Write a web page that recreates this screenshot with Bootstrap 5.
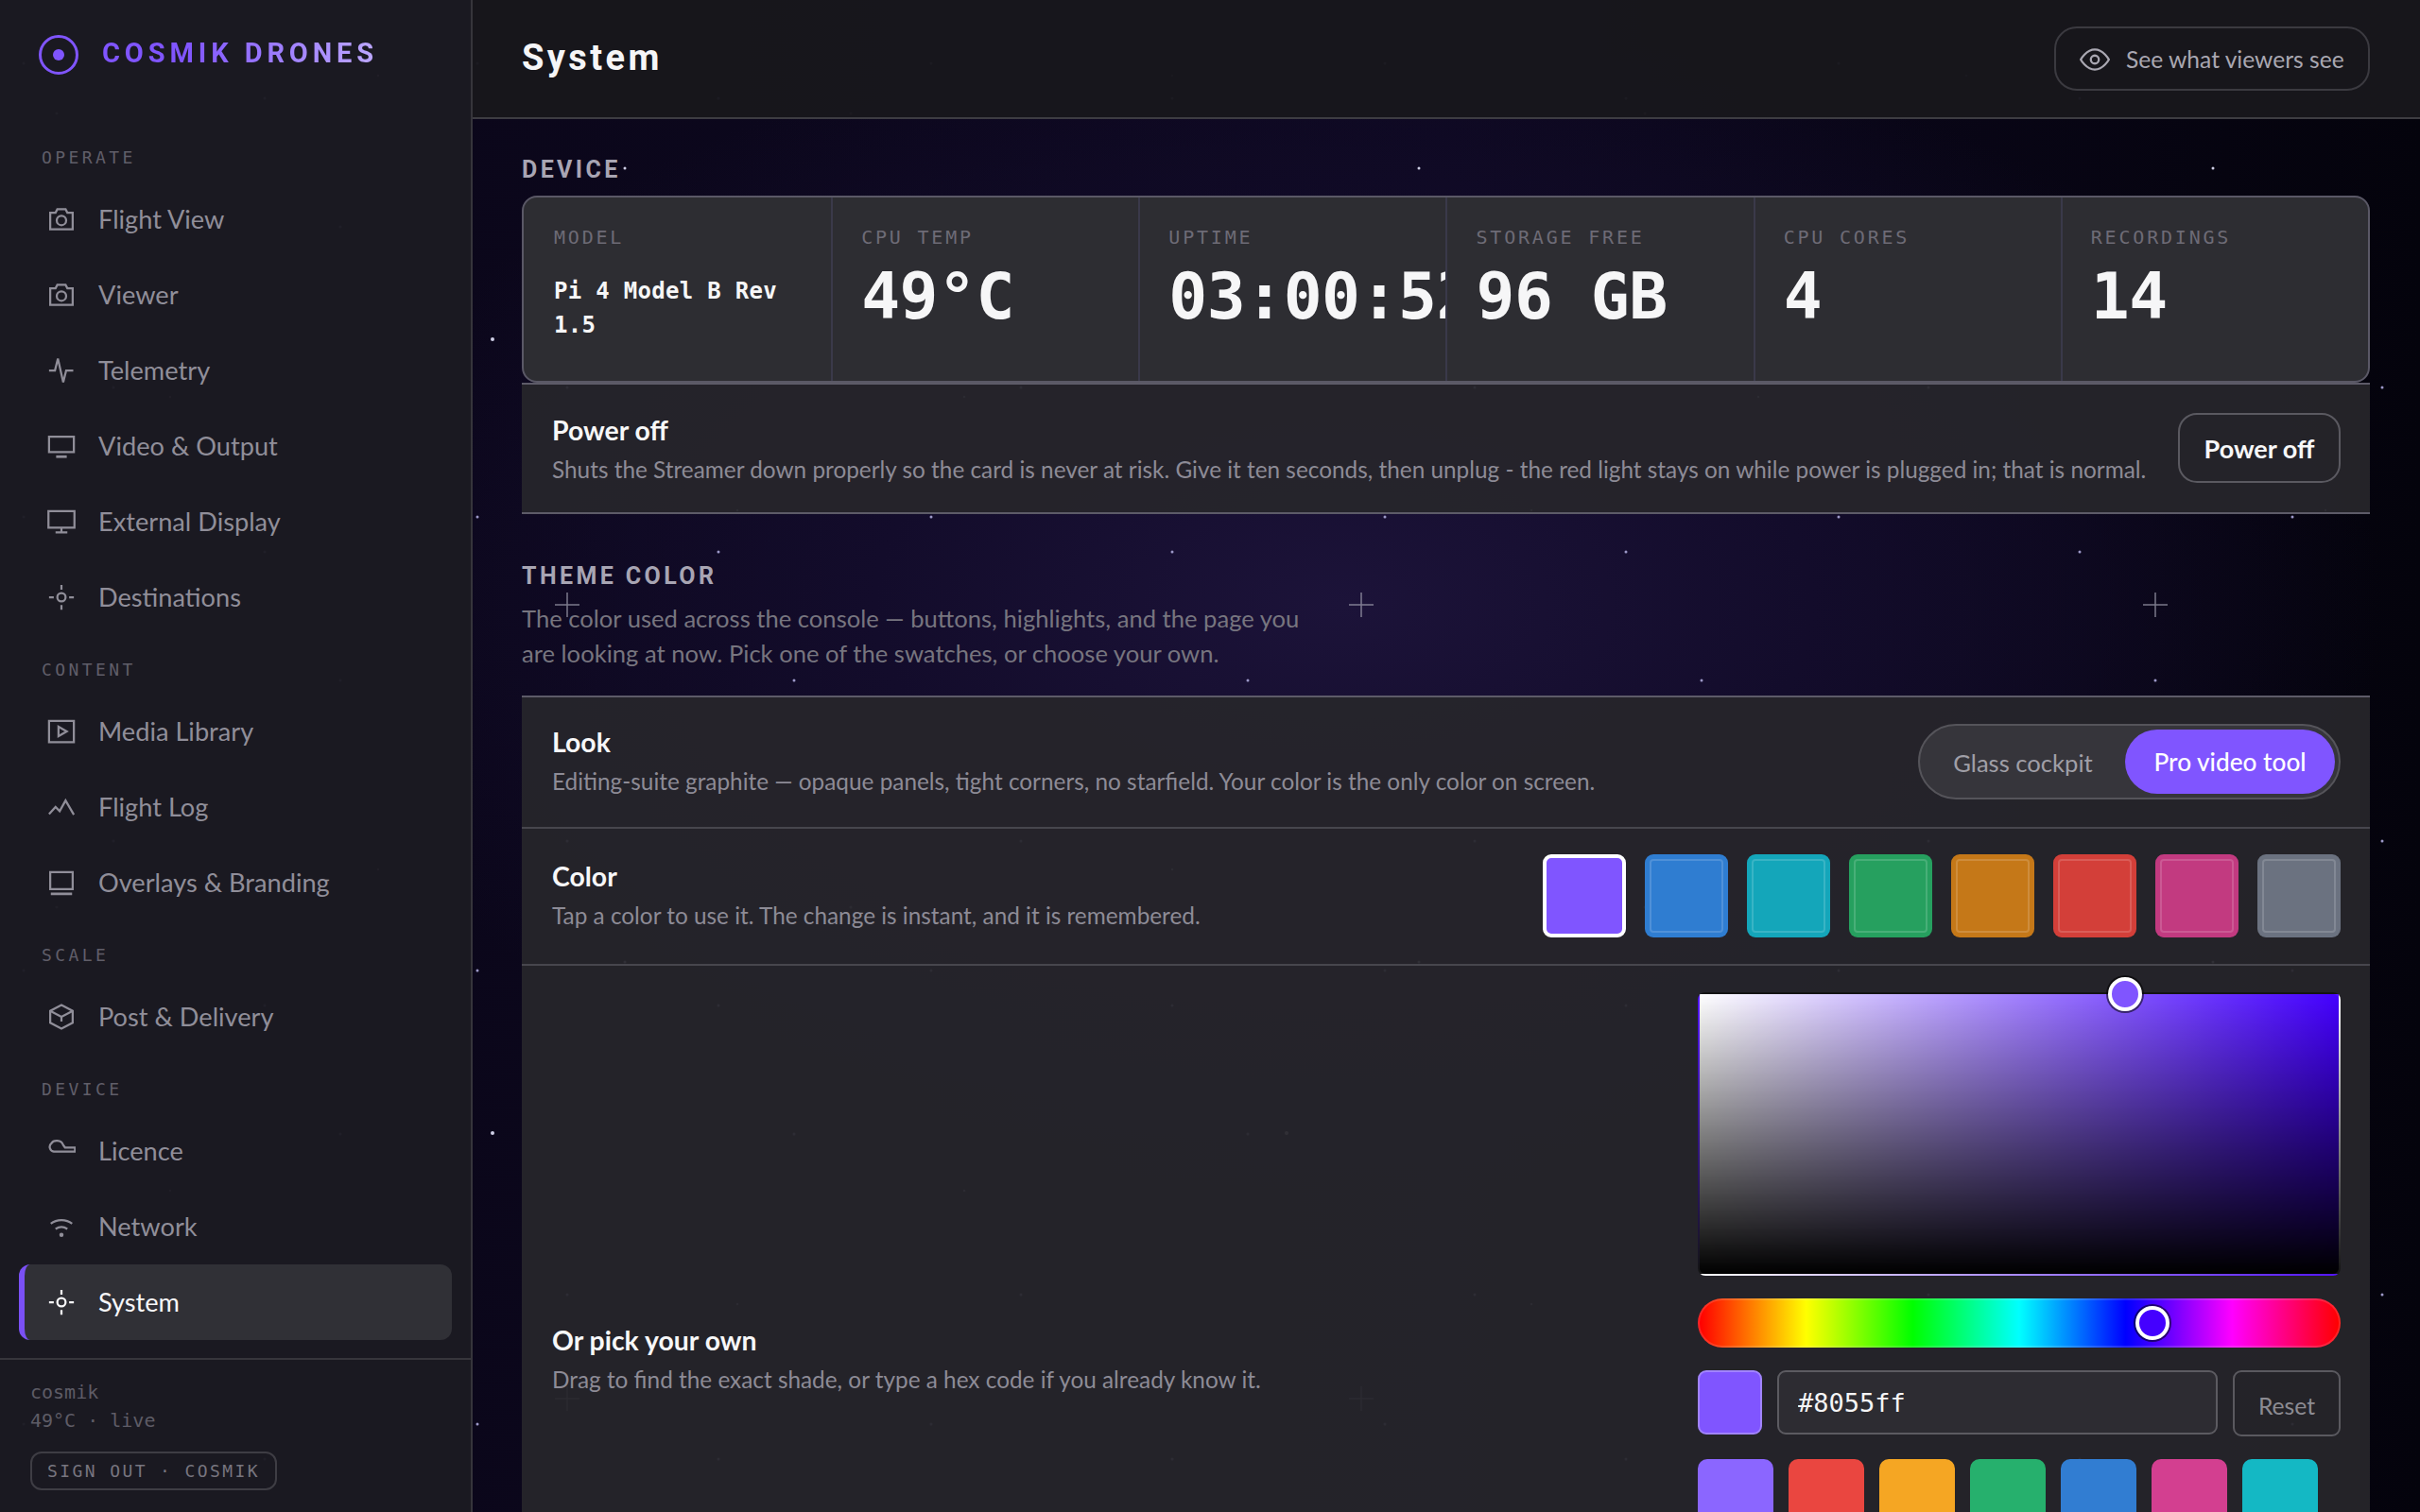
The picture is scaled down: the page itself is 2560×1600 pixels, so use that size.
<!DOCTYPE html>
<html lang="en">
<head>
  <meta charset="UTF-8" />
  <meta name="viewport" content="width=device-width, initial-scale=1.0" />
  <title>System</title>
  <link href="https://cdn.jsdelivr.net/npm/bootstrap@5.3.0/dist/css/bootstrap.min.css" rel="stylesheet" />
  <style>
    html, body { height: 100%; overflow: hidden; }

    body {
      font-family: Lato, "Noto Sans", sans-serif;
      color: #f5f5f7;
      background-color: #06040f;
      background-image:
        url("data:image/svg+xml,%3Csvg xmlns='http://www.w3.org/2000/svg' width='840' height='840'%3E%3Cg fill='%23cfcfe6'%3E%3Ccircle cx='661' cy='178' r='1.5'/%3E%3Ccircle cx='521' cy='359' r='2'/%3E%3C/g%3E%3Cg fill='%238f8ca8'%3E%3Ccircle cx='60' cy='120' r='1.5'/%3E%3Ccircle cx='400' cy='80' r='1.2'/%3E%3Ccircle cx='180' cy='420' r='1.2'/%3E%3Ccircle cx='780' cy='540' r='1.2'/%3E%3C/g%3E%3Cpath d='M600 627v26M587 640h26' stroke='%23a9a8b8' stroke-opacity='.7' stroke-width='1.5'/%3E%3C/svg%3E"),
        url("data:image/svg+xml,%3Csvg xmlns='http://www.w3.org/2000/svg' width='480' height='480'%3E%3Cg fill='%239c98c8'%3E%3Ccircle cx='25' cy='67' r='1.5'/%3E%3Ccircle cx='120' cy='410' r='1.5'/%3E%3Ccircle cx='280' cy='104' r='1.5'/%3E%3Ccircle cx='360' cy='240' r='1.5'/%3E%3C/g%3E%3C/svg%3E"),
        radial-gradient(ellipse 1100px 620px at 1420px 640px, #1c1339 0%, #130c2b 45%, rgba(8, 5, 20, 0) 100%),
        linear-gradient(90deg, #0a0618 0%, #0d0820 60%, #04030c 100%);
    }

    .app-shell { height: 100vh; }

    /* sidebar */
    .side-rail {
      width: 500px;
      background: rgba(27, 26, 33, .96);
      border-right: 2px solid #36353b;
    }

    .brand-row { height: 154px; padding: 36px 0 0 40px; gap: 24px; }
    .brand-name {
      font-family: Roboto, sans-serif;
      font-weight: 700;
      font-size: 29px;
      line-height: 40px;
      letter-spacing: 4.9px;
      background: linear-gradient(90deg, #8055ff 30%, #bda8ff 100%);
      -webkit-background-clip: text;
      background-clip: text;
      color: transparent;
    }

    .rail-nav { padding: 0 20px; }
    .rail-label {
      font-family: "DejaVu Sans Mono", monospace;
      font-size: 18px;
      line-height: 26px;
      letter-spacing: 3.4px;
      color: #605e69;
      padding-left: 24px;
      margin: 24px 0 12px;
    }
    .rail-label:first-child { margin-top: 0; }
    .rail-item {
      height: 80px;
      width: 458px;
      padding-left: 24px;
      gap: 24px;
      font-size: 27.2px;
      color: #908e99;
      text-decoration: none;
      border-left: 6px solid transparent;
      border-radius: 12px;
    }
    .rail-item.is-active {
      color: #f7f7f9;
      background: #303036;
      border-left-color: #7a50f5;
    }
    .nav-glyph { width: 30px; height: 30px; flex: none; fill: none; stroke: currentColor; stroke-width: 1.8; }

    .rail-foot {
      margin-top: 19px;
      padding: 19px 0 0 32px;
      border-top: 2px solid #36353b;
      font-family: "DejaVu Sans Mono", monospace;
      font-size: 20px;
      line-height: 30px;
      color: #5e5c66;
    }
    .signout-btn {
      display: block;
      width: 261px;
      height: 41px;
      margin-top: 18px;
      padding: 0;
      font-family: "DejaVu Sans Mono", monospace;
      font-size: 18px;
      line-height: 36px;
      letter-spacing: 2.4px;
      color: #77757f;
      background: transparent;
      border: 2px solid #3e3d44;
      border-radius: 12px;
    }

    /* top bar */
    .top-strip {
      height: 126px;
      padding: 0 53px 0 52px;
      background: rgba(24, 23, 28, .97);
      border-bottom: 2px solid #3d3c42;
    }
    .page-name {
      font-family: Roboto, sans-serif;
      font-weight: 700;
      font-size: 38px;
      letter-spacing: 3.4px;
      margin: 0;
    }
    .viewer-btn {
      height: 68px;
      width: 334px;
      padding: 2px 0 0 24px;
      gap: 16px;
      font-size: 24.6px;
      color: #a9a7b1;
      background: transparent;
      border: 2px solid #3b3a40;
      border-radius: 24px;
    }
    .viewer-btn svg { width: 34px; height: 34px; fill: none; stroke: currentColor; stroke-width: 1.6; }

    /* content */
    .page-body { padding: 0 53px 0 52px; }
    .block-title {
      font-family: Roboto, sans-serif;
      font-weight: 700;
      font-size: 25px;
      line-height: 32px;
      letter-spacing: 3.4px;
      color: #a8a5b3;
      margin: 0;
    }
    .block-title.first { padding-top: 38px; margin-bottom: 11px; }
    .block-title.second { margin-top: 50px; }
    .block-note {
      max-width: 850px;
      margin: 10px 0 26px;
      font-size: 25.6px;
      line-height: 37px;
      color: #77757f;
    }

    .stat-card {
      height: 198px;
      background: #2d2d32;
      border: 2px solid #5a5866;
      border-radius: 16px;
      overflow: hidden;
    }
    .stat-cell {
      height: 194px;
      padding: 30px 0 0 32px;
      overflow: hidden;
    }
    .stat-cell + .stat-cell { padding-left: 30px; border-left: 2px solid #3a394a; }
    .stat-label {
      font-family: "DejaVu Sans Mono", monospace;
      font-size: 20px;
      line-height: 24px;
      letter-spacing: 2.8px;
      color: #6d6b76;
    }
    .stat-value {
      font-family: "DejaVu Sans Mono", monospace;
      font-weight: 700;
      font-size: 68px;
      line-height: 64px;
      letter-spacing: -0.5px;
      margin-top: 19px;
      white-space: nowrap;
      color: #f6f6f7;
    }
    .stat-text {
      font-family: "DejaVu Sans Mono", monospace;
      font-weight: 700;
      font-size: 24px;
      line-height: 36px;
      letter-spacing: .3px;
      margin-top: 27px;
      color: #f6f6f7;
      padding-right: 20px;
    }

    .set-panel { background: rgba(38, 37, 43, .94); }
    .set-panel.top-edge { border-top: 2px solid #5d5b68; }
    .set-row {
      padding: 28px 31px 28px 32px;
      border-bottom: 2px solid #47464d;
    }
    .set-row.power-row {
      height: 139px;
      padding-top: 0;
      padding-bottom: 0;
      border-bottom-color: #5d5b68;
      box-shadow: inset 0 2px 0 #5d5b68;
    }
    .set-row.look-row { padding-bottom: 29px; }
    .set-row.color-row { padding-top: 27px; }
    .set-name { font-size: 28.4px; line-height: 38px; font-weight: 700; color: #f7f7f8; }
    .set-help { font-size: 24.35px; line-height: 38px; margin-top: 4px; color: #8d8b96; }

    .power-btn {
      width: 172px;
      height: 74px;
      padding: 4px 0 0;
      font-size: 27px;
      font-weight: 700;
      color: #f7f7f8;
      background: transparent;
      border: 2px solid #5a5960;
      border-radius: 20px;
    }

    .mode-switch {
      height: 80px;
      width: 447px;
      padding: 4px;
      background: #36353b;
      border: 2px solid #55545a;
      border-radius: 40px;
    }
    .mode-opt {
      height: 68px;
      padding: 2px 0 0;
      font-size: 25.6px;
      color: #a09fa7;
      background: transparent;
      border: 0;
      border-radius: 34px;
    }
    .mode-opt.glass { width: 210px; }
    .mode-opt.on { width: 222px; margin-left: auto; font-size: 26.2px; color: #fff; font-weight: 500; background: #8055ff; }

    .swatch-row { gap: 20px; }
    .swatch-tile {
      width: 88px;
      height: 88px;
      padding: 0;
      border: 0;
      border-radius: 9px;
      outline: 2px solid rgba(255, 255, 255, .16);
      outline-offset: -7px;
    }
    .swatch-tile.picked { border: 4px solid #fff; outline: 0; }

    .pick-row { height: 806px; padding: 28px 31px 0 32px; }
    .pick-col { width: 680px; flex: none; }
    .sv-field {
      position: relative;
      height: 300px;
      border: 2px solid rgba(255, 255, 255, .08);
      border-radius: 8px;
      background: linear-gradient(to top, #000, transparent), linear-gradient(to right, #fff, #4400ff);
    }
    .hue-track {
      position: relative;
      height: 52px;
      margin-top: 24px;
      border: 2px solid rgba(255, 255, 255, .14);
      border-radius: 26px;
      background: linear-gradient(to right, #f00, #ff0, #0f0, #0ff, #00f, #f0f, #f00);
    }
    .drag-knob {
      position: absolute;
      width: 36px;
      height: 36px;
      transform: translate(-50%, -50%);
      border: 4px solid #fff;
      border-radius: 50%;
      box-shadow: 0 0 0 2px rgba(0, 0, 0, .55);
    }
    .hex-row { gap: 16px; margin-top: 24px; }
    .hex-chip {
      width: 68px;
      height: 68px;
      flex: none;
      background: #8055ff;
      border: 2px solid #a184ff;
      border-radius: 9px;
    }
    .hex-input.form-control {
      height: 68px;
      padding: 0 20px;
      font-family: "DejaVu Sans Mono", monospace;
      font-size: 27px;
      font-weight: 500;
      color: #f5f5f6;
      background: #2d2c32;
      border: 2px solid #5c5b61;
      border-radius: 9px;
    }
    .reset-btn {
      width: 114px;
      height: 70px;
      flex: none;
      padding: 6px 0 0;
      font-size: 24.7px;
      color: #8c8b92;
      background: transparent;
      border: 2px solid #5a595f;
      border-radius: 9px;
    }
    .preset-row { gap: 16px; margin-top: 24px; }
    .preset-tile { width: 80px; height: 80px; flex: none; border-radius: 10px; }
  </style>
</head>

<body>

  <svg width="0" height="0" class="position-absolute">
    <symbol id="i-camera" viewBox="0 0 24 24"><path d="M2.500 6.500h4.500l1.500-3h7l1.500 3h4.500v14h-19z" /><circle cx="12" cy="13" r="4" /></symbol>
    <symbol id="i-pulse" viewBox="0 0 24 24"><path d="M1.500 12h5l2.500-10 4.500 20 2.500-10h6" /></symbol>
    <symbol id="i-screen" viewBox="0 0 24 24"><path d="M1.500 4h21v13h-21z" /><path d="M7.500 21h9" stroke-width="2.200" /></symbol>
    <symbol id="i-display" viewBox="0 0 24 24"><path d="M1 3h22v14h-22z" /><path d="M12 17v4M7 21h10" /></symbol>
    <symbol id="i-target" viewBox="0 0 24 24"><circle cx="12" cy="12" r="3.500" /><path d="M12 1.500v4M12 18.500v4M1.500 12h4M18.500 12h4" /></symbol>
    <symbol id="i-media" viewBox="0 0 24 24"><path d="M1.500 3h21v18h-21z" /><path d="M9.500 8l7 4-7 4z" /></symbol>
    <symbol id="i-chart" viewBox="0 0 24 24"><path d="M1.500 18l5.500-6 3.500 3.500 5-9 7 12" /></symbol>
    <symbol id="i-overlay" viewBox="0 0 24 24"><path d="M2.500 3h19v14.500h-19z" /><path d="M3 21.500h18" stroke-width="2.200" /></symbol>
    <symbol id="i-box" viewBox="0 0 24 24"><path d="M12 2l9.500 5v10l-9.500 5-9.500-5v-10z" /><path d="M2.500 7l9.500 5 9.500-5M12 12v4" /></symbol>
    <symbol id="i-cloud" viewBox="0 0 24 24"><path d="M23.500 12.500h-18a4 4 0 0 1-2-7c1.500-3 8.500-3.500 10 1.500l1.500 2h8.500z" /></symbol>
    <symbol id="i-wifi" viewBox="0 0 24 24"><path d="M3 9.500c5-4 13-4 18 0M7 14c3-2 7-2 10 0" /><circle cx="12" cy="19" r="1.800" fill="currentColor" stroke="none" /></symbol>
  </svg>

  <div class="app-shell d-flex">

    <aside class="side-rail flex-shrink-0">
      <div class="brand-row d-flex align-items-start">
        <svg width="44" height="44" viewBox="0 0 44 44" class="flex-shrink-0">
          <circle cx="22" cy="22" r="19.500" fill="none" stroke="#8055ff" stroke-width="3" />
          <circle cx="22" cy="22" r="6" fill="#8055ff" />
        </svg>
        <span class="brand-name">COSMIK DRONES</span>
      </div>

      <nav class="rail-nav">
        <div class="rail-label">OPERATE</div>
        <a href="#" class="rail-item d-flex align-items-center"><svg class="nav-glyph"><use href="#i-camera" /></svg>Flight View</a>
        <a href="#" class="rail-item d-flex align-items-center"><svg class="nav-glyph"><use href="#i-camera" /></svg>Viewer</a>
        <a href="#" class="rail-item d-flex align-items-center"><svg class="nav-glyph"><use href="#i-pulse" /></svg>Telemetry</a>
        <a href="#" class="rail-item d-flex align-items-center"><svg class="nav-glyph"><use href="#i-screen" /></svg>Video &amp; Output</a>
        <a href="#" class="rail-item d-flex align-items-center"><svg class="nav-glyph"><use href="#i-display" /></svg>External Display</a>
        <a href="#" class="rail-item d-flex align-items-center"><svg class="nav-glyph"><use href="#i-target" /></svg>Destinations</a>

        <div class="rail-label">CONTENT</div>
        <a href="#" class="rail-item d-flex align-items-center"><svg class="nav-glyph"><use href="#i-media" /></svg>Media Library</a>
        <a href="#" class="rail-item d-flex align-items-center"><svg class="nav-glyph"><use href="#i-chart" /></svg>Flight Log</a>
        <a href="#" class="rail-item d-flex align-items-center"><svg class="nav-glyph"><use href="#i-overlay" /></svg>Overlays &amp; Branding</a>

        <div class="rail-label">SCALE</div>
        <a href="#" class="rail-item d-flex align-items-center"><svg class="nav-glyph"><use href="#i-box" /></svg>Post &amp; Delivery</a>

        <div class="rail-label">DEVICE</div>
        <a href="#" class="rail-item d-flex align-items-center"><svg class="nav-glyph"><use href="#i-cloud" /></svg>Licence</a>
        <a href="#" class="rail-item d-flex align-items-center"><svg class="nav-glyph"><use href="#i-wifi" /></svg>Network</a>
        <a href="#" class="rail-item is-active d-flex align-items-center"><svg class="nav-glyph"><use href="#i-target" /></svg>System</a>
      </nav>

      <div class="rail-foot">
        <div>cosmik</div>
        <div>49°C · live</div>
        <button type="button" class="signout-btn">SIGN OUT · COSMIK</button>
      </div>
    </aside>

    <main class="flex-grow-1 overflow-hidden">
      <header class="top-strip d-flex justify-content-between align-items-center">
        <h1 class="page-name">System</h1>
        <button type="button" class="viewer-btn d-flex align-items-center">
          <svg viewBox="0 0 24 24"><path d="M1.500 12s4-7.500 10.500-7.500 10.500 7.500 10.500 7.500-4 7.500-10.500 7.500-10.500-7.500-10.500-7.500z" /><circle cx="12" cy="12" r="3" /></svg>
          See what viewers see
        </button>
      </header>

      <div class="page-body">
        <h2 class="block-title first">DEVICE</h2>

        <div class="stat-card row g-0">
          <div class="stat-cell col-2">
            <div class="stat-label">MODEL</div>
            <div class="stat-text">Pi 4 Model B Rev 1.5</div>
          </div>
          <div class="stat-cell col-2">
            <div class="stat-label">CPU TEMP</div>
            <div class="stat-value">49°C</div>
          </div>
          <div class="stat-cell col-2">
            <div class="stat-label">UPTIME</div>
            <div class="stat-value">03:00:52</div>
          </div>
          <div class="stat-cell col-2">
            <div class="stat-label">STORAGE FREE</div>
            <div class="stat-value">96 GB</div>
          </div>
          <div class="stat-cell col-2">
            <div class="stat-label">CPU CORES</div>
            <div class="stat-value">4</div>
          </div>
          <div class="stat-cell col-2">
            <div class="stat-label">RECORDINGS</div>
            <div class="stat-value">14</div>
          </div>
        </div>

        <div class="set-panel">
          <div class="set-row power-row d-flex justify-content-between align-items-center">
            <div class="pt-1">
              <div class="set-name">Power off</div>
              <div class="set-help">Shuts the Streamer down properly so the card is never at risk. Give it ten seconds, then unplug - the red light stays on while power is plugged in; that is normal.</div>
            </div>
            <button type="button" class="power-btn flex-shrink-0">Power off</button>
          </div>
        </div>

        <h2 class="block-title second">THEME COLOR</h2>
        <p class="block-note">The color used across the console — buttons, highlights, and the page you are looking at now. Pick one of the swatches, or choose your own.</p>

        <div class="set-panel top-edge">
          <div class="set-row look-row d-flex justify-content-between align-items-center">
            <div>
              <div class="set-name">Look</div>
              <div class="set-help">Editing-suite graphite — opaque panels, tight corners, no starfield. Your color is the only color on screen.</div>
            </div>
            <div class="mode-switch d-flex">
              <button type="button" class="mode-opt glass">Glass cockpit</button>
              <button type="button" class="mode-opt on">Pro video tool</button>
            </div>
          </div>

          <div class="set-row color-row d-flex justify-content-between align-items-center">
            <div>
              <div class="set-name">Color</div>
              <div class="set-help">Tap a color to use it. The change is instant, and it is remembered.</div>
            </div>
            <div class="swatch-row d-flex">
              <button type="button" class="swatch-tile picked" style="background:#8055ff"></button>
              <button type="button" class="swatch-tile" style="background:#2f7dd1"></button>
              <button type="button" class="swatch-tile" style="background:#14a6ba"></button>
              <button type="button" class="swatch-tile" style="background:#26a05f"></button>
              <button type="button" class="swatch-tile" style="background:#c57818"></button>
              <button type="button" class="swatch-tile" style="background:#d33f39"></button>
              <button type="button" class="swatch-tile" style="background:#c23a80"></button>
              <button type="button" class="swatch-tile" style="background:#6b7280"></button>
            </div>
          </div>

          <div class="pick-row d-flex justify-content-between">
            <div class="align-self-center">
              <div class="set-name">Or pick your own</div>
              <div class="set-help">Drag to find the exact shade, or type a hex code if you already know it.</div>
            </div>
            <div class="pick-col">
              <div class="sv-field">
                <span class="drag-knob" style="left:66.5%;top:0;background:#8055ff"></span>
              </div>
              <div class="hue-track">
                <span class="drag-knob" style="left:70.8%;top:50%;background:#4400ff"></span>
              </div>
              <div class="hex-row d-flex align-items-start">
                <div class="hex-chip"></div>
                <input type="text" class="hex-input form-control" value="#8055ff" />
                <button type="button" class="reset-btn">Reset</button>
              </div>
              <div class="preset-row d-flex">
                <div class="preset-tile" style="background:#8b66ff"></div>
                <div class="preset-tile" style="background:#ea4640"></div>
                <div class="preset-tile" style="background:#f5a623"></div>
                <div class="preset-tile" style="background:#26b06d"></div>
                <div class="preset-tile" style="background:#317dd2"></div>
                <div class="preset-tile" style="background:#d33f90"></div>
                <div class="preset-tile" style="background:#14b8c4"></div>
              </div>
            </div>
          </div>
        </div>
      </div>
    </main>
  </div>

</body>
</html>
